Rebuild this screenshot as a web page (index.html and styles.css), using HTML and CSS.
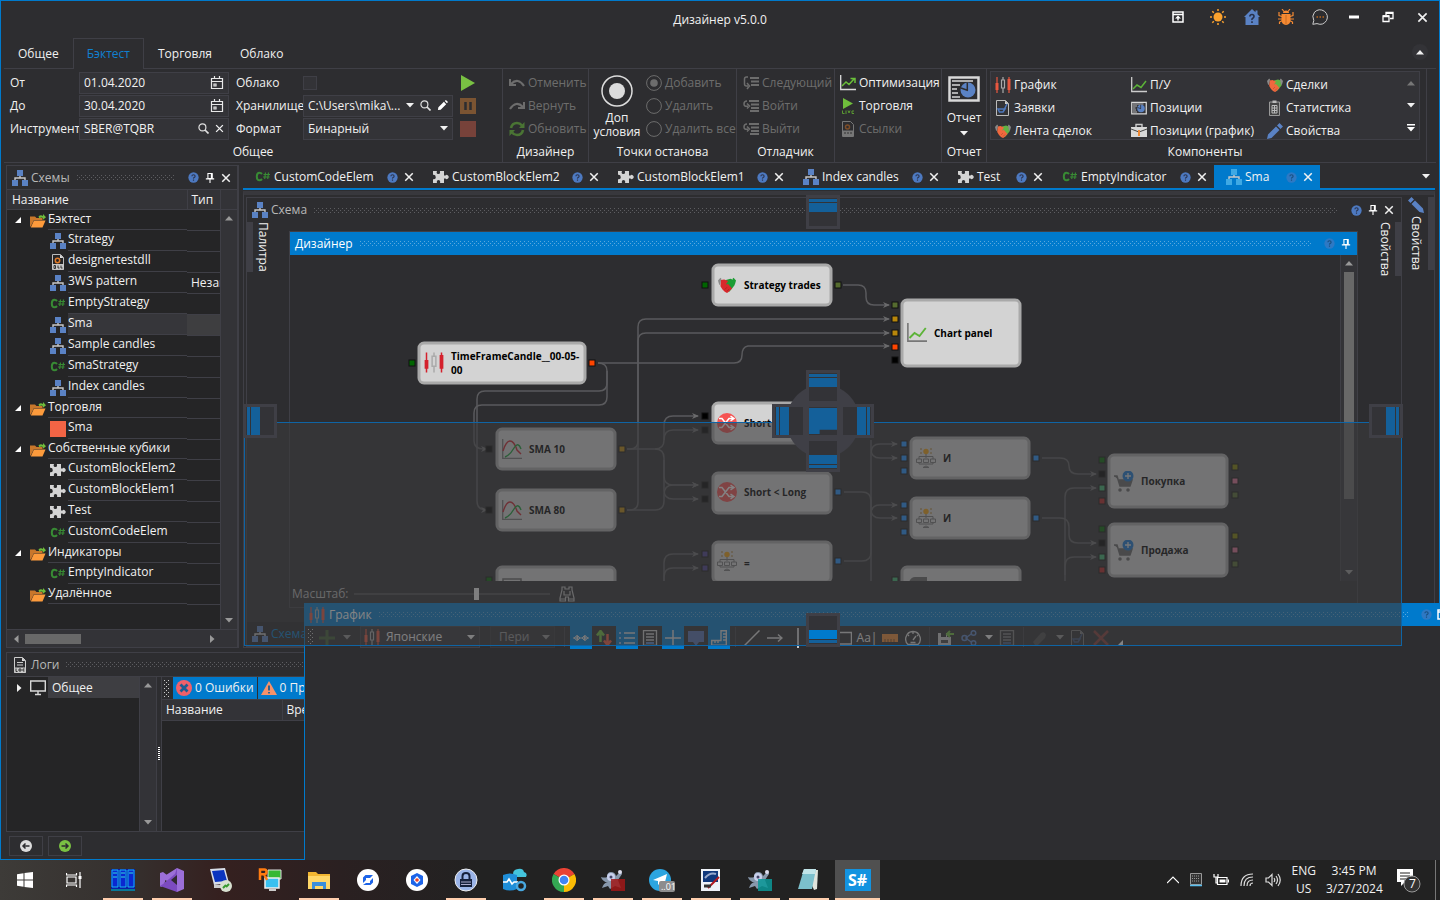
FILE: index.html
```html
<!DOCTYPE html>
<html lang="ru">
<head>
    <meta charset="UTF-8">
    <meta name="viewport" content="width=device-width, initial-scale=1.0">
    <title>Дизайнер v5.0.0</title>
    <link rel="stylesheet" href="styles.css">
</head>
<body>
    <!-- icon set -->
    <svg class="defs" width="0" height="0" aria-hidden="true">
        <symbol id="scheme" viewBox="0 0 16 16"><path d="M5 0h6v6H5zM0 10h6v6H0zM10 10h6v6h-6z" fill="var(--scheme, #5a82c4)"/><path d="M8 6v2M3 10V8h10v2" fill="none" stroke="#c8c8c8" stroke-width="1.4"/></symbol>
        <symbol id="help" viewBox="0 0 16 16"><circle cx="8" cy="8" r="7.500" fill="#4d79c0"/><path d="M5.600 6.200Q5.800 4 8 4t2.300 2q0 1.200-1.300 2T8 9.700M8 11v1.600" fill="none" stroke="#2b3550" stroke-width="1.700"/></symbol>
        <symbol id="pin" viewBox="0 0 12 14"><path d="M3.500 1.500h5v6h-5zM1 8h10M6 8v5" fill="none" stroke="#fff" stroke-width="1.300"/><path d="M7 1.500h2v6H7z" fill="#fff"/></symbol>
        <symbol id="close" viewBox="0 0 12 12"><path d="M1.500 1.500l9 9M10.500 1.500l-9 9" stroke="#f1f1f1" stroke-width="1.800"/></symbol>
        <symbol id="csharp" viewBox="0 0 16 16"><path d="M7 5Q6 3.800 4.500 3.800 1.800 3.800 1.800 7.500T4.500 11.200q1.500 0 2.500-1.200" fill="none" stroke="#388a34" stroke-width="2"/><path d="M10.500 3.500l-.8 6.500M13.500 3.500l-.8 6.500M8.500 5.500H15M8 8h6.500" stroke="#388a34" stroke-width="1.200"/></symbol>
        <symbol id="puzzle" viewBox="0 0 16 16"><path d="M0 2h4q-1.200 3 1.300 3T6.800 2H11v4.500h1.500Q13.500 5 15 6.500t0 3q-1.500 1.500-2.500 0H11V14H7q.8-3-1.500-3T4 14H0v-3.800q2.800.6 2.800-2T0 5.800z" fill="#d4d4d4"/></symbol>
        <symbol id="folder" viewBox="0 0 16 16"><path d="M0 3.500h5l1.500 1.500h6v2H4l-3 6-1 1z" fill="#c9772b"/><path d="M4 7.500h11.500l-3 7H.8z" fill="#fd9b3c"/><path d="M8.500 3.500Q10.500 1.500 13 3V1l3 3.200-3 2.600V5q-2.200-1-3.500.5z" fill="#6fbd3c"/></symbol>
        <symbol id="dll" viewBox="0 0 16 16"><path d="M2.500.5h8l3 3v12h-11z" fill="none" stroke="#bbb"/><path d="M10 .5v3.500h3.500" fill="#ddd"/><circle cx="7.500" cy="6.500" r="2.200" fill="none" stroke="#e07a28" stroke-width="1.500"/><path d="M2 10h12v5.500H2z" fill="#c8c8c8"/><path d="M4 11.500v3h1.500v-3zM8 11.500v2.500h1.500M11 11.500v2.500h1.500" stroke="#333" fill="none"/></symbol>
        <symbol id="log" viewBox="0 0 16 16"><path d="M2.500.5h8l3 3v12h-11z" fill="none" stroke="#ccc"/><path d="M10 .5v3.500h3.500" fill="#ddd"/><path d="M5 5.500h6M5 8h6" stroke="#ccc"/><path d="M2 10.500h12v5H2z" fill="#c8c8c8"/><path d="M4 11.500v3h1.500M7 12h2v2H7zM12.500 12H11v2h1.500" stroke="#333" fill="none"/></symbol>
        <symbol id="candles" viewBox="0 0 16 16"><path d="M2 0v16M14 0v16" stroke="var(--candle, #e8573f)" stroke-width="1.200"/><path d="M.5 6h3v7h-3zM12.500 2h3v11h-3z" fill="var(--candle, #e8573f)"/><path d="M8 0v3M8 11v5M6.500 3h3v8h-3z" fill="none" stroke="#aaa" stroke-width="1.200"/></symbol>
        <symbol id="chart" viewBox="0 0 16 16"><path d="M.7 0v14.500H16" fill="none" stroke="var(--axis, #ccc)" stroke-width="1.300"/><path d="M2 12l4-4 4 2.500L15 4" fill="none" stroke="#5cb338" stroke-width="1.500"/></symbol>
        <symbol id="optimize" viewBox="0 0 16 16"><path d="M.7 0v14.500H16" fill="none" stroke="#ddd" stroke-width="1.300"/><path d="M2 11l4-4 3 2.500 5-5.500M10.500 3.500H15V8" fill="none" stroke="#6abf3a" stroke-width="1.500"/></symbol>
        <symbol id="hands" viewBox="0 0 16 16"><path d="M7 3.500l4-1 3 1 .5 5-2 2.500-2.500 3-2-1L5.500 8z" fill="var(--hand-b, #63b144)"/><path d="M2.500 3.500l3-.5L9 4.500 7 7.500l2-.5 3.500 4-1 1-1 1-1.500 1.500-1 .5-2-1-2-2-1.800-3z" fill="var(--hand-a, #f0683e)"/><path d="M6 12l2-2M8 13.500l2-2" stroke="#0003" stroke-width=".8"/><path d="M0 4l2.200-2.500.8 1L1.800 8 1 7.500z" fill="#8a8a8a"/><path d="M16 4l-2.200-2.500-.8 1L14.200 8l.8-.5z" fill="var(--hand-b, #8a8a8a)"/></symbol>
        <symbol id="order" viewBox="0 0 16 16"><path d="M1.500.5h9l3 3v12h-12z" fill="none" stroke="#bbb"/><path d="M10 .5v3.500h3.500" fill="#ccc"/><path d="M3 9h7l-2 3H4.500zM8 12l4-8" fill="none" stroke="#4e78bd" stroke-width="1.500"/></symbol>
        <symbol id="report" viewBox="0 0 32 26"><path d="M1.500 1.500h29v23h-29z" fill="none" stroke="#d8d8d8" stroke-width="2.500"/><path d="M4 5h21M4 9h8M4 13h5M4 17h6M4 21h8" stroke="#d8d8d8" stroke-width="1.600"/><circle cx="20" cy="14" r="7.500" fill="#5a82c4"/><path d="M19.300 14V6.500M20 14.500l-7-2.500" stroke="#2d2d30" stroke-width="1.500"/></symbol>
        <symbol id="case" viewBox="0 0 16 16"><path d="M5 4V1.500h6V4" fill="none" stroke="#ccc" stroke-width="1.400"/><path d="M0 4h16v10H0z" fill="#d8d8d8"/><path d="M0 6l8 3 8-3" fill="none" stroke="#444"/><path d="M7 7h2v6H7z" fill="#f08a35"/></symbol>
        <symbol id="clip" viewBox="0 0 16 16"><path d="M2.500 2h10v13.500h-10z" fill="#444" stroke="#999"/><path d="M5.500.5h4V3h-4z" fill="#bbb"/><path d="M5 13V5.500h5V13zM5 8h5M5 10.500h5M7.500 5.500V13" fill="none" stroke="#bbb"/></symbol>
        <symbol id="pencil" viewBox="0 0 16 16"><path d="M0 16l1-4.500L9 3.500 12.500 7l-8 8zM10 2.500L12.500 0 16 3.500 13.500 6z" fill="#5a82c4"/></symbol>
        <symbol id="search" viewBox="0 0 12 12"><circle cx="4.800" cy="4.800" r="3.800" fill="none" stroke="#e0e0e0" stroke-width="1.300"/><path d="M7.600 7.600L11.500 11.500" stroke="#e0e0e0" stroke-width="1.800"/></symbol>
        <symbol id="edit" viewBox="0 0 12 12"><path d="M1 11l.5-3L7.500 2l2.500 2.500-6 6zM8.500 1.200L9.700 0 12 2.200 10.800 3.500z" fill="#fff"/></symbol>
        <symbol id="calendar" viewBox="0 0 14 14"><path d="M1.500 2.500h11v10h-11zM1.500 5.500h11M4.500 0v3M9.500 0v3M4 8h2v2H4z" fill="none" stroke="#e8e8e8" stroke-width="1.200"/></symbol>
        <symbol id="undo" viewBox="0 0 16 16"><path d="M1 4v6h6" fill="none" stroke="#6d6d6d" stroke-width="2"/><path d="M2 9Q9 2 15 11" fill="none" stroke="#6d6d6d" stroke-width="2.200"/></symbol>
        <symbol id="refresh" viewBox="0 0 16 16"><path d="M2 7Q3 2 8 2q3 0 5 2.500M14 9q-1 5-6 5-3 0-5-2.500" fill="none" stroke="#4a7434" stroke-width="2.600"/><path d="M15.500 1v6H10zM.5 15V9H6z" fill="#4a7434"/></symbol>
        <symbol id="dot-ring" viewBox="0 0 16 16"><circle cx="8" cy="8" r="7.400" fill="none" stroke="#6d6d6d"/><circle cx="8" cy="8" r="3.800" fill="#6d6d6d"/></symbol>
        <symbol id="ring" viewBox="0 0 16 16"><circle cx="8" cy="8" r="7.400" fill="none" stroke="#6d6d6d"/></symbol>
        <symbol id="step-over" viewBox="0 0 16 16"><path d="M5 2H3.500Q1.500 2 1.500 4v5q0 2 2 2H5M4 8l2.500 3L4 14" fill="none" stroke="#6d6d6d" stroke-width="1.500"/><path d="M7 3h9M8 6.500h8M8 10h8" stroke="#6d6d6d" stroke-width="2"/></symbol>
        <symbol id="step-in" viewBox="0 0 16 16"><path d="M4 3Q1 3 1 6t4 2M4 5.500L6.500 8 4 10.500" fill="none" stroke="#6d6d6d" stroke-width="1.500"/><path d="M6 3h10M8 6.500h8M8 10h8M7 13h9" stroke="#6d6d6d" stroke-width="1.800"/></symbol>
        <symbol id="links" viewBox="0 0 16 16"><path d="M2.500.5h8l3 3v12h-11z" fill="none" stroke="#777"/><circle cx="7.500" cy="6" r="2" fill="none" stroke="#7e4e28" stroke-width="1.500"/><path d="M2 9.500h12V15H2z" fill="#777"/><path d="M4 12h8" stroke="#333" stroke-dasharray="2 1"/></symbol>
        <symbol id="live" viewBox="0 0 16 16"><path d="M3 0l10 5.500L3 11z" fill="#6fbd3c"/><path d="M2.500 12.500v3h2M6 12.500V16M8 12.500l1 2.500 1-2.500M14 13h-2v2.500h2" stroke="#5a9a30" fill="none"/></symbol>
        <symbol id="monitor" viewBox="0 0 16 16"><path d="M.7 1h14.600v10H.7zM8 11v3M5 14.500h6" fill="none" stroke="#d8d8d8" stroke-width="1.400"/></symbol>
        <symbol id="expanded" viewBox="0 0 6 6"><path d="M6 0v6H0z" fill="#fff"/></symbol>
        <symbol id="down" viewBox="0 0 8 5"><path d="M0 0h8L4 4.500z" fill="currentColor"/></symbol>
        <symbol id="up" viewBox="0 0 8 5"><path d="M0 4.500h8L4 0z" fill="currentColor"/></symbol>
        <symbol id="left" viewBox="0 0 5 8"><path d="M4.500 0v8L0 4z" fill="currentColor"/></symbol>
        <symbol id="right" viewBox="0 0 5 8"><path d="M0 0v8l4.500-4z" fill="currentColor"/></symbol>
        <symbol id="indicator" viewBox="0 0 20 20"><path d="M.7 0v19.300H20" fill="none" stroke="#777" stroke-width="1.300"/><path d="M1 12Q4 2 8 2t7 9l4 4" fill="none" stroke="#c8202c" stroke-width="1.400"/><path d="M3 18Q8 16 12 9t7 1" fill="none" stroke="#149c34" stroke-width="1.400"/></symbol>
        <symbol id="cross-flow" viewBox="0 0 20 20"><circle cx="10" cy="10" r="10" fill="#f65252"/><path d="M2 5.500h3l7 9h4M2 14.500h3l7-9h4M13.500 3L17 5.500 13.500 8M13.500 12l3.500 2.500-3.500 2.500" fill="none" stroke="#fff" stroke-width="1.500"/></symbol>
        <symbol id="logic" viewBox="0 0 20 20"><circle cx="10" cy="3.500" r="2.700" fill="#f0a010"/><path d="M4 1h2M4 5h2M14 1h2M14 5h2" stroke="#b08030"/><path d="M10 6v4M3 11V8.500h14V11M.5 11h5v3.500h-5zM7.500 11h5v3.500h-5zM14.500 11h5v3.500h-5zM3 14.500V16h14v-1.500M7 19.500q3-3 6 0z" fill="none" stroke="#777"/></symbol>
        <symbol id="cart" viewBox="0 0 20 22"><path d="M0 5h3l3 10h10l2-6H5" fill="#666" stroke="#666" stroke-width="1.500"/><circle cx="6" cy="19" r="1.800" fill="#666"/><circle cx="14" cy="19" r="1.800" fill="#666"/><circle cx="14" cy="5" r="5.500" fill="#1676d0"/><path d="M14 2v6M11 5h6" stroke="#ddd" stroke-width="1.300"/></symbol>
        <symbol id="text-doc" viewBox="0 0 16 16"><path d="M1.500.5h13v15h-13z" fill="none" stroke="#ccc" stroke-width="1.300"/><path d="M4 4h8M4 7h8M4 10h8" stroke="#ccc" stroke-width="1.500"/><path d="M4 12h8v2H4z" fill="#5a82c4"/></symbol>
        <marker id="arrow" viewBox="0 0 7 6" refX="6" refY="3" markerWidth="7" markerHeight="6" markerUnits="userSpaceOnUse" orient="auto"><path d="M0 0l7 3-7 3 2-3z" fill="#6a6a6c"/></marker>
    </svg>

    <div class="app">
        <header class="titlebar">
            <h1>Дизайнер v5.0.0</h1>
            <div class="title-buttons">
                <button class="wide" aria-label="Закрепить"><svg width="12" height="12" viewBox="0 0 12 12"><path d="M1 1h10v10H1zM1 3.500h10" fill="none" stroke="#fff" stroke-width="1.500"/><path d="M6 4.500L9 7.500H3zM5.300 7h1.400v2.500H5.300z" fill="#fff"/></svg></button>
                <button aria-label="Тема"><svg width="16" height="16" viewBox="0 0 16 16"><circle cx="8" cy="8" r="4.500" fill="#fba22e"/><path d="M8 0v2M8 14v2M0 8h2M14 8h2M2.300 2.300l1.500 1.500M12.200 12.200l1.500 1.500M13.700 2.300l-1.500 1.500M3.800 12.200l-1.500 1.500" stroke="#fba22e" stroke-width="1.500"/></svg></button>
                <button aria-label="Справка"><svg width="16" height="16" viewBox="0 0 16 16"><path d="M8 0l3.500 3.200V1.500h2v3.700L16 8h-1.500v8h-13V8H0z" fill="#5a82c4"/><path d="M5.800 7.500Q6 5.500 8 5.500t2 2q0 1-1.200 1.700T8 11M8 12.300V14" fill="none" stroke="#26304a" stroke-width="1.600"/></svg></button>
                <button aria-label="Ошибка"><svg width="16" height="16" viewBox="0 0 16 16"><path d="M5 4q0-2.500 3-2.500T11 4zM3.500 5h9v6q0 4.500-4.500 5-4.500-.5-4.500-5z" fill="#f58a33"/><path d="M4 0l2 2.500M12 0l-2 2.500M1 3v3.500l3 1M15 3v3.500l-3 1M0 10h4M16 10h-4M1.500 15v-2l3-1.500M14.500 15v-2l-3-1.500" fill="none" stroke="#f58a33" stroke-width="1.200"/><path d="M8 6v9" stroke="#c86a20"/></svg></button>
                <button aria-label="Чат"><svg width="16" height="16" viewBox="0 0 16 16"><path d="M.8 15.300l1-3.800Q-.5 7 2.500 3.200 7-1.200 12.500 2.300q4.500 4 2 9.200Q11 17 5 14.600z" fill="none" stroke="#ccc"/><path d="M4.500 8h1.500M7.500 8H9M10.500 8H12" stroke="#b8651e" stroke-width="1.500"/></svg></button>
                <button aria-label="Свернуть"><svg width="12" height="12" viewBox="0 0 12 12"><path d="M1 6h10" stroke="#fff" stroke-width="3"/></svg></button>
                <button aria-label="Восстановить"><svg width="12" height="12" viewBox="0 0 12 12"><path d="M1 5h6v5.500H1zM4 4V1.500h7v6H8" fill="none" stroke="#fff" stroke-width="1.300"/><path d="M1 5.300h6M4 2h7" stroke="#fff" stroke-width="2"/></svg></button>
                <button aria-label="Закрыть"><svg width="11" height="11"><use href="#close"/></svg></button>
            </div>
        </header>

        <nav class="ribbon-tabs">
            <a href="#">Общее</a>
            <a href="#" class="active">Бэктест</a>
            <a href="#">Торговля</a>
            <a href="#">Облако</a>
            <button class="collapse" aria-label="Свернуть ленту"><svg width="8" height="5"><use href="#up"/></svg></button>
        </nav>

        <section class="ribbon">
            <div class="group g-common">
                <div class="fields">
                    <label for="from">От</label>
                    <div class="field"><input id="from" value="01.04.2020"><button aria-label="Календарь"><svg width="14" height="14"><use href="#calendar"/></svg></button></div>
                    <label for="cloud">Облако</label>
                    <input type="checkbox" id="cloud">
                    <button aria-label="Старт"><svg width="16" height="16" viewBox="0 0 16 16"><path d="M1 0l14 8-14 8z" fill="#79c143"/></svg></button>
                    <label for="to">До</label>
                    <div class="field"><input id="to" value="30.04.2020"><button aria-label="Календарь"><svg width="14" height="14"><use href="#calendar"/></svg></button></div>
                    <label for="storage">Хранилище</label>
                    <div class="field"><select id="storage"><option>C:\Users\mika\....</option></select><svg width="8" height="5"><use href="#down"/></svg><button aria-label="Найти"><svg width="11" height="11"><use href="#search"/></svg></button><button aria-label="Изменить"><svg width="11" height="11"><use href="#edit"/></svg></button></div>
                    <button aria-label="Пауза"><svg width="16" height="16" viewBox="0 0 16 16"><path d="M0 0h16v16H0z" fill="#7b5432"/><path d="M5.500 4v8M10.500 4v8" stroke="#2d2d30" stroke-width="2.500"/></svg></button>
                    <label for="security">Инструмент</label>
                    <div class="field"><input id="security" value="SBER@TQBR"><button aria-label="Найти"><svg width="11" height="11"><use href="#search"/></svg></button><button aria-label="Очистить"><svg width="9" height="9"><use href="#close"/></svg></button></div>
                    <label for="format">Формат</label>
                    <div class="field"><select id="format"><option>Бинарный</option></select><svg width="8" height="5"><use href="#down"/></svg></div>
                    <button aria-label="Стоп"><svg width="16" height="16" viewBox="0 0 16 16"><path d="M0 0h16v16H0z" fill="#77423a"/></svg></button>
                </div>
                <h2>Общее</h2>
            </div>
            <div class="group g-designer">
                <div class="commands">
                    <button disabled><svg width="16" height="16"><use href="#undo"/></svg>Отменить</button>
                    <button disabled><svg class="flip" width="16" height="16"><use href="#undo"/></svg>Вернуть</button>
                    <button disabled><svg width="16" height="16"><use href="#refresh"/></svg>Обновить</button>
                </div>
                <h2>Дизайнер</h2>
            </div>
            <div class="group g-breaks">
                <div class="split">
                    <button class="big"><svg width="32" height="32" viewBox="0 0 32 32"><circle cx="16" cy="16" r="15" fill="none" stroke="#ddd" stroke-width="1.500"/><circle cx="16" cy="16" r="8" fill="#dcdcdc"/></svg>Доп<br>условия</button>
                    <div class="commands">
                        <button disabled><svg width="16" height="16"><use href="#dot-ring"/></svg>Добавить</button>
                        <button disabled><svg width="16" height="16"><use href="#ring"/></svg>Удалить</button>
                        <button disabled><svg width="16" height="16"><use href="#ring"/></svg>Удалить все</button>
                    </div>
                </div>
                <h2>Точки останова</h2>
            </div>
            <div class="group g-debug">
                <div class="commands">
                    <button disabled><svg width="16" height="16"><use href="#step-over"/></svg>Следующий</button>
                    <button disabled><svg width="16" height="16"><use href="#step-in"/></svg>Войти</button>
                    <button disabled><svg width="16" height="16"><use href="#step-in"/></svg>Выйти</button>
                </div>
                <h2>Отладчик</h2>
            </div>
            <div class="group g-run">
                <div class="commands">
                    <button><svg width="16" height="16"><use href="#optimize"/></svg>Оптимизация</button>
                    <button><svg width="16" height="16"><use href="#live"/></svg>Торговля</button>
                    <button disabled><svg width="16" height="16"><use href="#links"/></svg>Ссылки</button>
                </div>
            </div>
            <div class="group g-report">
                <button class="big"><svg width="32" height="32"><use href="#report"/></svg>Отчет<svg width="8" height="5"><use href="#down"/></svg></button>
                <h2>Отчет</h2>
            </div>
            <div class="group g-parts">
                <div class="gallery">
                    <div class="gallery-items">
                        <button><svg width="16" height="16"><use href="#candles"/></svg>График</button>
                        <button><svg width="16" height="16"><use href="#chart"/></svg>П/У</button>
                        <button><svg width="16" height="16"><use href="#hands"/></svg>Сделки</button>
                        <button><svg width="16" height="16"><use href="#order"/></svg>Заявки</button>
                        <button><svg width="16" height="16"><use href="#report"/></svg>Позиции</button>
                        <button><svg width="16" height="16"><use href="#clip"/></svg>Статистика</button>
                        <button><svg width="16" height="16"><use href="#hands"/></svg>Лента сделок</button>
                        <button><svg width="16" height="16"><use href="#case"/></svg>Позиции (график)</button>
                        <button><svg width="16" height="16"><use href="#pencil"/></svg>Свойства</button>
                    </div>
                    <div class="gallery-nav">
                        <button class="dim" aria-label="Вверх"><svg width="8" height="5"><use href="#up"/></svg></button>
                        <button aria-label="Вниз"><svg width="8" height="5"><use href="#down"/></svg></button>
                        <button aria-label="Все"><svg width="8" height="8" viewBox="0 0 8 8"><path d="M0 0h8v1.500H0zM0 3h8L4 7.500z" fill="#fff"/></svg></button>
                    </div>
                </div>
                <h2>Компоненты</h2>
            </div>
        </section>

        <main class="workspace">
            <section class="panel schemes">
                <header class="caption">
                    <svg width="16" height="16"><use href="#scheme"/></svg>
                    <h3>Схемы</h3>
                    <span class="dots"></span>
                    <button aria-label="Справка"><svg width="11" height="11"><use href="#help"/></svg></button>
                    <button aria-label="Закрепить"><svg width="10" height="12"><use href="#pin"/></svg></button>
                    <button aria-label="Закрыть"><svg width="10" height="10"><use href="#close"/></svg></button>
                </header>
                <div class="tree">
                    <table>
                        <thead><tr><th>Название</th><th>Тип</th><th class="gutter"></th></tr></thead>
                        <tbody>
                            <tr class="parent"><td><svg class="exp" width="6" height="6"><use href="#expanded"/></svg><svg width="16" height="16"><use href="#folder"/></svg><span>Бэктест</span></td><td></td></tr>
                            <tr><td><svg width="16" height="16"><use href="#scheme"/></svg><span>Strategy</span></td><td></td></tr>
                            <tr><td><svg width="16" height="16"><use href="#dll"/></svg><span>designertestdll</span></td><td></td></tr>
                            <tr><td><svg width="16" height="16"><use href="#scheme"/></svg><span>3WS pattern</span></td><td>Независимая</td></tr>
                            <tr><td><svg width="16" height="16"><use href="#csharp"/></svg><span>EmptyStrategy</span></td><td></td></tr>
                            <tr class="selected"><td><svg width="16" height="16"><use href="#scheme"/></svg><span>Sma</span></td><td></td></tr>
                            <tr><td><svg width="16" height="16"><use href="#scheme"/></svg><span>Sample candles</span></td><td></td></tr>
                            <tr><td><svg width="16" height="16"><use href="#csharp"/></svg><span>SmaStrategy</span></td><td></td></tr>
                            <tr><td><svg width="16" height="16"><use href="#scheme"/></svg><span>Index candles</span></td><td></td></tr>
                            <tr class="parent"><td><svg class="exp" width="6" height="6"><use href="#expanded"/></svg><svg width="16" height="16"><use href="#folder"/></svg><span>Торговля</span></td><td></td></tr>
                            <tr><td><svg width="16" height="16" viewBox="0 0 16 16"><path d="M0 0h16v16H0z" fill="#f26445"/></svg><span>Sma</span></td><td></td></tr>
                            <tr class="parent"><td><svg class="exp" width="6" height="6"><use href="#expanded"/></svg><svg width="16" height="16"><use href="#folder"/></svg><span>Собственные кубики</span></td><td></td></tr>
                            <tr><td><svg width="16" height="16"><use href="#puzzle"/></svg><span>CustomBlockElem2</span></td><td></td></tr>
                            <tr><td><svg width="16" height="16"><use href="#puzzle"/></svg><span>CustomBlockElem1</span></td><td></td></tr>
                            <tr><td><svg width="16" height="16"><use href="#puzzle"/></svg><span>Test</span></td><td></td></tr>
                            <tr><td><svg width="16" height="16"><use href="#csharp"/></svg><span>CustomCodeElem</span></td><td></td></tr>
                            <tr class="parent"><td><svg class="exp" width="6" height="6"><use href="#expanded"/></svg><svg width="16" height="16"><use href="#folder"/></svg><span>Индикаторы</span></td><td></td></tr>
                            <tr><td><svg width="16" height="16"><use href="#csharp"/></svg><span>EmptyIndicator</span></td><td></td></tr>
                            <tr class="parent"><td><i class="exp"></i><svg width="16" height="16"><use href="#folder"/></svg><span>Удалённое</span></td><td></td></tr>
                        </tbody>
                    </table>
                    <div class="vscroll"><svg width="8" height="5"><use href="#up"/></svg><svg width="8" height="5"><use href="#down"/></svg></div>
                </div>
                <div class="hscroll"><svg width="5" height="8"><use href="#left"/></svg><i></i><svg width="5" height="8"><use href="#right"/></svg></div>
            </section>

            <section class="documents">
                <nav class="doc-tabs">
                    <div class="doc-tab"><svg width="16" height="16"><use href="#csharp"/></svg><a href="#">CustomCodeElem</a><button aria-label="Справка"><svg width="11" height="11"><use href="#help"/></svg></button><button aria-label="Закрыть"><svg width="10" height="10"><use href="#close"/></svg></button></div>
                    <div class="doc-tab"><svg width="16" height="16"><use href="#puzzle"/></svg><a href="#">CustomBlockElem2</a><button aria-label="Справка"><svg width="11" height="11"><use href="#help"/></svg></button><button aria-label="Закрыть"><svg width="10" height="10"><use href="#close"/></svg></button></div>
                    <div class="doc-tab"><svg width="16" height="16"><use href="#puzzle"/></svg><a href="#">CustomBlockElem1</a><button aria-label="Справка"><svg width="11" height="11"><use href="#help"/></svg></button><button aria-label="Закрыть"><svg width="10" height="10"><use href="#close"/></svg></button></div>
                    <div class="doc-tab"><svg width="16" height="16"><use href="#scheme"/></svg><a href="#">Index candles</a><button aria-label="Справка"><svg width="11" height="11"><use href="#help"/></svg></button><button aria-label="Закрыть"><svg width="10" height="10"><use href="#close"/></svg></button></div>
                    <div class="doc-tab"><svg width="16" height="16"><use href="#puzzle"/></svg><a href="#">Test</a><button aria-label="Справка"><svg width="11" height="11"><use href="#help"/></svg></button><button aria-label="Закрыть"><svg width="10" height="10"><use href="#close"/></svg></button></div>
                    <div class="doc-tab"><svg width="16" height="16"><use href="#csharp"/></svg><a href="#">EmptyIndicator</a><button aria-label="Справка"><svg width="11" height="11"><use href="#help"/></svg></button><button aria-label="Закрыть"><svg width="10" height="10"><use href="#close"/></svg></button></div>
                    <div class="doc-tab active"><svg width="16" height="16"><use href="#scheme"/></svg><a href="#">Sma</a><button class="faded" aria-label="Справка"><svg width="11" height="11"><use href="#help"/></svg></button><button aria-label="Закрыть"><svg width="10" height="10"><use href="#close"/></svg></button></div>
                    <button class="more" aria-label="Список"><svg width="8" height="5"><use href="#down"/></svg></button>
                </nav>
                <div class="doc-body">
                    <div class="scheme-panel">
                        <header class="caption">
                            <svg width="16" height="16"><use href="#scheme"/></svg>
                            <h3>Схема</h3>
                            <span class="dots"></span>
                            <button aria-label="Справка"><svg width="11" height="11"><use href="#help"/></svg></button>
                            <button aria-label="Закрепить"><svg width="10" height="12"><use href="#pin"/></svg></button>
                            <button aria-label="Закрыть"><svg width="10" height="10"><use href="#close"/></svg></button>
                        </header>
                        <div class="scheme-body">
                            <button class="side-tab left">Палитра</button>
                            <div class="designer">
                                <header class="caption blue">
                                    <h3>Дизайнер</h3>
                                    <span class="dots"></span>
                                    <button class="faded" aria-label="Справка"><svg width="11" height="11"><use href="#help"/></svg></button>
                                    <button aria-label="Закрепить"><svg width="10" height="12"><use href="#pin"/></svg></button>
                                </header>
                                <div class="canvas">
                                    <svg class="diagram" width="1050" height="327" viewBox="290 255 1050 327">
                                        <g class="wires">
                                            <path d="M843 285h15q8 0 8 8v4q0 8 8 8h15"/>
                                            <path d="M598 363h136q8 0 8-8t6-9h141"/>
                                            <path d="M598 363q9 0 9 8v12q0 8-8 8H485q-8 0-8 8v102q0 9 10 9"/>
                                            <path d="M607 371v26q0 8-8 8H482q-8 0-8 8v28q0 8 10 8h3"/>
                                            <path d="M627 510h3q8 0 8-8V327q0-8 8-8h243"/>
                                            <path d="M627 449h3q8 0 8-8V341q0-8 8-8h243"/>
                                            <path d="M627 449h28q9 0 9-9v-15q0-9 9-9h25"/>
                                            <path d="M664 440q0-10 9-10h25"/>
                                            <path d="M655 449q9 0 9 9v18q0 9 9 9h25"/>
                                            <path d="M627 510h28q9 0 9-9v-6q0-10 9-10h25"/>
                                            <path d="M664 460v30q0 9 9 9h25"/>
                                            <path d="M664 582v-19q0-9 9-9h25"/>
                                            <path d="M664 582v-5q0-9 9-9h25"/>
                                            <path class="tail" d="M844 492h18q9 0 9 9v81"/>
                                            <path d="M844 561h18q9 0 9-9V453q0-9 9-9h17"/>
                                            <path d="M871 440v9q0 9 9 9h17"/>
                                            <path d="M871 520v-6q0-9 9-9h17"/>
                                            <path d="M871 500v9q0 9 9 9h17"/>
                                            <path d="M1042 458h18q9 0 9 8t9 8h18"/>
                                            <path d="M1042 518h18q9 0 9 9v8q0 8 9 8h18"/>
                                            <path d="M1065 582v-85q0-9 9-9h22"/>
                                            <path d="M1065 575v-9q0-9 9-9h22"/>
                                        </g>
                                        <g class="node">
                                            <rect x="713" y="265" width="118" height="40"/>
                                            <rect x="419" y="343" width="166" height="40"/>
                                            <rect x="902" y="300" width="118" height="66"/>
                                            <rect x="713" y="403" width="118" height="40"/>
                                            <rect x="497" y="429" width="118" height="40"/>
                                            <rect x="497" y="490" width="118" height="40"/>
                                            <rect x="497" y="567" width="118" height="40"/>
                                            <rect x="713" y="473" width="118" height="40"/>
                                            <rect x="713" y="542" width="118" height="40"/>
                                            <rect x="911" y="438" width="118" height="40"/>
                                            <rect x="911" y="498" width="118" height="40"/>
                                            <rect x="902" y="567" width="118" height="40"/>
                                            <rect x="1109" y="455" width="118" height="52"/>
                                            <rect x="1109" y="524" width="118" height="52"/>
                                        </g>
                                        <g class="glyphs">
                                            <use href="#hands" x="718" y="276" width="18" height="18"/>
                                            <use href="#candles" x="424" y="352" width="20" height="21"/>
                                            <use href="#chart" x="907" y="323" width="20" height="20"/>
                                            <use href="#cross-flow" x="717" y="413" width="20" height="20"/>
                                            <use href="#indicator" x="502" y="439" width="20" height="20"/>
                                            <use href="#indicator" x="502" y="500" width="20" height="20"/>
                                            <use href="#cross-flow" x="717" y="482" width="20" height="20"/>
                                            <use href="#logic" x="717" y="551" width="20" height="20"/>
                                            <use href="#logic" x="916" y="448" width="20" height="20"/>
                                            <use href="#logic" x="916" y="508" width="20" height="20"/>
                                            <use href="#cart" x="1114" y="471" width="20" height="22"/>
                                            <use href="#cart" x="1114" y="540" width="20" height="22"/>
                                            <path d="M503 579h18v4h-18zM506 582h12" fill="none" stroke="#666" stroke-width="1.500"/>
                                            <path d="M909 582q2-5 6-5h12v5z" fill="#666"/>
                                        </g>
                                        <g class="labels">
                                            <text x="744" y="289">Strategy trades</text>
                                            <text x="451" y="360">TimeFrameCandle__00-05-</text>
                                            <text x="451" y="374">00</text>
                                            <text x="934" y="337">Chart panel</text>
                                            <text x="744" y="427">Short &gt; Long</text>
                                            <text x="529" y="453">SMA 10</text>
                                            <text x="529" y="514">SMA 80</text>
                                            <text x="744" y="496">Short &lt; Long</text>
                                            <text x="744" y="567">=</text>
                                            <text x="943" y="462">И</text>
                                            <text x="943" y="522">И</text>
                                            <text x="1141" y="485">Покупка</text>
                                            <text x="1141" y="554">Продажа</text>
                                        </g>
                                        <g class="ports">
                                            <g fill="#006400"><rect x="702" y="282" width="6" height="6"/><rect x="409" y="360" width="6" height="6"/><rect x="486" y="577" width="6" height="6"/><rect x="1099" y="457" width="6" height="6"/><rect x="1099" y="526" width="6" height="6"/></g>
                                            <g fill="#556b2f"><rect x="835" y="282" width="6" height="6"/><rect x="892" y="302" width="6" height="6"/><rect x="1232" y="492" width="6" height="6"/><rect x="1232" y="561" width="6" height="6"/></g>
                                            <g fill="#b8860b"><rect x="892" y="316" width="6" height="6"/><rect x="892" y="330" width="6" height="6"/><rect x="619" y="446" width="6" height="6"/><rect x="619" y="507" width="6" height="6"/></g>
                                            <g fill="#ff4500"><rect x="892" y="344" width="6" height="6"/><rect x="589" y="360" width="6" height="6"/></g>
                                            <g fill="#000"><rect x="892" y="357" width="6" height="6"/><rect x="702" y="413" width="6" height="6"/><rect x="702" y="427" width="6" height="6"/><rect x="486" y="446" width="6" height="6"/><rect x="486" y="507" width="6" height="6"/><rect x="702" y="482" width="6" height="6"/><rect x="702" y="496" width="6" height="6"/><rect x="1099" y="471" width="6" height="6"/><rect x="1099" y="540" width="6" height="6"/></g>
                                            <g fill="#483d8b"><rect x="702" y="551" width="6" height="6"/><rect x="702" y="565" width="6" height="6"/></g>
                                            <g fill="#1e90ff"><rect x="835" y="489" width="6" height="6"/><rect x="835" y="558" width="6" height="6"/><rect x="901" y="441" width="6" height="6"/><rect x="901" y="455" width="6" height="6"/><rect x="901" y="468" width="6" height="6"/><rect x="901" y="502" width="6" height="6"/><rect x="901" y="515" width="6" height="6"/><rect x="901" y="529" width="6" height="6"/><rect x="1033" y="455" width="6" height="6"/><rect x="1033" y="515" width="6" height="6"/></g>
                                            <g fill="#3cb371"><rect x="892" y="577" width="6" height="6"/><rect x="1099" y="485" width="6" height="6"/><rect x="1099" y="554" width="6" height="6"/></g>
                                            <g fill="#b22222"><rect x="1099" y="498" width="6" height="6"/><rect x="1099" y="567" width="6" height="6"/></g>
                                            <g fill="#808000"><rect x="1232" y="464" width="6" height="6"/><rect x="1232" y="533" width="6" height="6"/></g>
                                            <g fill="#db7093"><rect x="1232" y="478" width="6" height="6"/><rect x="1232" y="547" width="6" height="6"/></g>
                                        </g>
                                    </svg>
                                    <div class="vscroll"><svg width="8" height="5"><use href="#up"/></svg><i></i><svg width="8" height="5"><use href="#down"/></svg></div>
                                </div>
                                <div class="scale">
                                    <label for="zoom">Масштаб:</label>
                                    <input type="range" id="zoom" min="0" max="100" value="63">
                                    <button aria-label="Обзор"><svg width="16" height="16" viewBox="0 0 16 16"><path d="M3 1h3v2h4V1h3v3l2 8v3H9.500v-4h-3v4H1v-3l2-8zM5 5v4h6V5M1 13h5M10 13h5" fill="none" stroke="#bbb" stroke-width="1.200"/></svg></button>
                                </div>
                            </div>
                            <button class="side-tab right">Свойства</button>
                        </div>
                        <div class="bottom-tabs"><a href="#"><svg width="16" height="16"><use href="#scheme"/></svg>Схема</a></div>
                    </div>
                    <aside class="doc-side"><button class="side-tab right"><svg class="turn" width="16" height="16"><use href="#pencil"/></svg>Свойства</button></aside>
                </div>
            </section>
        </main>

        <section class="panel logs">
            <header class="caption">
                <svg width="16" height="16"><use href="#log"/></svg>
                <h3>Логи</h3>
                <span class="dots"></span>
            </header>
            <div class="logs-body">
                <div class="log-tree">
                    <div class="log-row"><svg width="5" height="8"><use href="#right"/></svg><svg width="16" height="16"><use href="#monitor"/></svg><span>Общее</span></div>
                    <div class="vscroll"><svg width="8" height="5"><use href="#up"/></svg><svg width="8" height="5"><use href="#down"/></svg></div>
                </div>
                <div class="splitter"></div>
                <div class="log-list">
                    <div class="log-filter">
                        <i class="grip"></i>
                        <button><svg width="16" height="16" viewBox="0 0 16 16"><circle cx="8" cy="8" r="8" fill="#f0606a"/><path d="M4.500 4.500l7 7M11.500 4.500l-7 7" stroke="#1d5d92" stroke-width="2.800"/></svg>0 Ошибки</button>
                        <button><svg width="16" height="16" viewBox="0 0 16 16"><path d="M8 1l8 14H0z" fill="#f5926a"/><path d="M8 5.500v5M8 12v1.500" stroke="#1d5d92" stroke-width="1.800"/></svg>0 Предупреждения</button>
                    </div>
                    <table>
                        <thead><tr><th>Название</th><th>Время</th></tr></thead>
                    </table>
                </div>
            </div>
        </section>

        <footer class="history">
            <button aria-label="Назад"><svg width="12" height="12" viewBox="0 0 12 12"><circle cx="6" cy="6" r="6" fill="#dcdcdc"/><path d="M9.500 6H3M5.500 3.500L3 6l2.500 2.500" fill="none" stroke="#2d2d30" stroke-width="1.500"/></svg></button>
            <button aria-label="Вперёд"><svg width="12" height="12" viewBox="0 0 12 12"><circle cx="6" cy="6" r="6" fill="#7ac143"/><path d="M2.500 6H9M6.500 3.500L9 6 6.500 8.500" fill="none" stroke="#2d2d30" stroke-width="1.500"/></svg></button>
        </footer>

        <!-- detached chart window being dragged -->
        <section class="chart-window">
            <header class="caption blue">
                <svg width="16" height="16"><use href="#candles"/></svg>
                <h3>График</h3>
                <span class="dots"></span>
                <button class="faded" aria-label="Справка"><svg width="11" height="11"><use href="#help"/></svg></button>
                <button aria-label="Развернуть"><svg width="11" height="11" viewBox="0 0 11 11"><path d="M1 1h9v9H1zM1 3h9" fill="none" stroke="#fff" stroke-width="1.500"/></svg></button>
            </header>
            <div class="toolbar">
                <i class="grip"></i>
                <button class="off" aria-label="Добавить"><svg width="16" height="16" viewBox="0 0 16 16"><path d="M8 0v16M0 8h16" stroke="#4f8f35" stroke-width="3"/></svg></button>
                <button class="arrow off" aria-label="Меню"><svg width="8" height="5"><use href="#down"/></svg></button>
                <div class="combo"><svg width="16" height="16"><use href="#candles"/></svg><select aria-label="Вид"><option>Японские</option></select><svg width="8" height="5"><use href="#down"/></svg></div>
                <div class="combo period off"><select aria-label="Период" disabled><option>Период</option></select><svg width="8" height="5"><use href="#down"/></svg></div>
                <i class="sep"></i>
                <button class="on" aria-label="Сжать"><svg width="16" height="16" viewBox="0 0 16 16"><path d="M0 8h16M1 8l3-2.500v5zM7 8L4.500 5.500v5zM9 8l2.500-2.500v5zM15 8l-3-2.500v5z" fill="none" stroke="#ddd"/></svg></button>
                <button aria-label="Сделки"><svg width="16" height="16" viewBox="0 0 16 16"><path d="M4.500 12V2M1 5.500L4.500 1 8 5.500" fill="none" stroke="#6fbd3c" stroke-width="2.500"/><path d="M11.500 4v11M8 10.500l3.500 4.500 3.500-4.500" fill="none" stroke="#f0583c" stroke-width="2.500"/></svg></button>
                <button class="on" aria-label="Легенда"><svg width="16" height="16" viewBox="0 0 16 16"><path d="M5 3h11M5 8h11M5 13h11" stroke="#ddd" stroke-width="1.500"/><path d="M0 3h2M0 8h2M0 13h2" stroke="#8fb8e8" stroke-width="2"/></svg></button>
                <button aria-label="Текст"><svg width="16" height="16"><use href="#text-doc"/></svg></button>
                <button class="on" aria-label="Перекрестие"><svg width="16" height="16" viewBox="0 0 16 16"><path d="M8 0v16M0 8h16" stroke="#ddd" stroke-width="1.500"/></svg></button>
                <button aria-label="Подсказка"><svg width="16" height="16" viewBox="0 0 16 16"><path d="M0 1h16v11h-5l-3 4-3-4H0z" fill="#5571b0"/></svg></button>
                <button class="on" aria-label="Линейка"><svg width="16" height="16" viewBox="0 0 16 16"><path d="M.7 10.500H10V.7h5.300v14.600H.7zM12 4h3M12 7h3M12 10h3M4 11v2M7 11v2" fill="none" stroke="#ddd" stroke-width="1.400"/></svg></button>
                <i class="sep"></i>
                <button aria-label="Линия"><svg width="16" height="16" viewBox="0 0 16 16"><path d="M.5 15.500l15-15" stroke="#ddd" stroke-width="1.500"/></svg></button>
                <button aria-label="Стрелка"><svg width="16" height="16" viewBox="0 0 16 16"><path d="M0 8h15M11 4.500L15 8l-4 3.500" fill="none" stroke="#ddd" stroke-width="1.500"/></svg></button>
                <button aria-label="Вертикаль"><svg width="16" height="20" viewBox="0 0 16 20"><path d="M8 0v20" stroke="#fff" stroke-width="1.500"/></svg></button>
                <button aria-label="Горизонталь"><svg width="16" height="16" viewBox="0 0 16 16"><path d="M0 8h16" stroke="#ddd" stroke-width="1.500"/></svg></button>
                <button aria-label="Прямоугольник"><svg width="16" height="16" viewBox="0 0 16 16"><path d="M0 2.500h15.500v11.500H0" fill="none" stroke="#ddd" stroke-width="1.500"/></svg></button>
                <button aria-label="Надпись">Aa|</button>
                <button aria-label="Измерить"><svg width="16" height="16" viewBox="0 0 16 16"><path d="M0 4h16v8H0z" fill="#f08a35"/><path d="M3 9v3M6 9v3M9 9v3M12 9v3" stroke="#7a4a20"/></svg></button>
                <button aria-label="Скорость"><svg width="16" height="16" viewBox="0 0 16 16"><path d="M3 14.500Q0 12 .8 7.500 2.500 1.500 8 1.500t7.200 6Q16 12 13 14.500zM8 10l3-4M8 2v2M3 5l1 1M13 5l-1 1M5.500 12.500h5" fill="none" stroke="#ddd" stroke-width="1.300"/></svg></button>
                <i class="sep"></i>
                <button aria-label="Сохранить"><svg width="16" height="16" viewBox="0 0 16 16"><path d="M0 3h3v4h5V3h1v4h4v8H0z" fill="#ccc"/><path d="M3 10h7v3H3z" fill="#444"/><path d="M16 4H9M12 1L9 4l3 3" fill="none" stroke="#6fbd3c" stroke-width="2"/></svg></button>
                <button aria-label="Поделиться"><svg width="16" height="16" viewBox="0 0 16 16"><path d="M4.500 8L11 3.500M4.500 8l6.500 4.500" stroke="#5a82c4" stroke-width="1.400"/><g fill="none" stroke="#5a82c4" stroke-width="1.500"><circle cx="3.500" cy="8" r="2.500"/><circle cx="12.500" cy="3" r="2.300"/><circle cx="12.500" cy="13" r="2.300"/></g></svg></button>
                <button class="arrow" aria-label="Меню"><svg width="8" height="5"><use href="#down"/></svg></button>
                <button class="off" aria-label="Список"><svg width="16" height="16"><use href="#text-doc"/></svg></button>
                <i class="sep"></i>
                <button class="off" aria-label="Вложение"><svg width="16" height="16" viewBox="0 0 16 16"><path d="M3 15L1 12l8-9q4-2 5 2l-1 3-7 7z" fill="#666"/></svg></button>
                <button class="arrow off" aria-label="Меню"><svg width="8" height="5"><use href="#down"/></svg></button>
                <button class="off" aria-label="Заявка"><svg width="16" height="16"><use href="#order"/></svg></button>
                <button class="off" aria-label="Удалить"><svg width="16" height="16" viewBox="0 0 16 16"><path d="M1 1l14 14M15 1L1 15" stroke="#d84a3a" stroke-width="2.500"/></svg></button>
                <svg class="corner" width="6" height="6"><use href="#expanded"/></svg>
            </div>
        </section>

        <!-- docking preview and guides -->
        <div class="dock">
            <div class="preview"></div>
            <i class="guide top edge"></i>
            <i class="guide left edge"></i>
            <i class="guide right edge"></i>
            <i class="guide bottom edge hot"></i>
            <div class="compass">
                <i class="guide top"></i>
                <i class="guide left"></i>
                <i class="guide center"></i>
                <i class="guide right"></i>
                <i class="guide bottom"></i>
            </div>
        </div>
    </div>

    <footer class="taskbar">
        <button aria-label="Start"><svg width="16" height="16" viewBox="0 0 16 16"><path d="M0 2.200L6.500 1.300v6.200H0zM7.500 1.100L16 0v7.500H7.500zM0 8.500h6.500v6.200L0 13.800zM7.500 8.500H16V16l-8.500-1.100z" fill="#fff"/></svg></button>
        <button aria-label="Task view"><svg width="16" height="16" viewBox="0 0 16 16"><path d="M1 5h9v6H1zM.5 1v2h10V1M.5 15v-2h10v2M14 0v16" fill="none" stroke="#fff" stroke-width="1.200"/><path d="M12.500 4h3v3h-3z" fill="#fff"/></svg></button>
        <button class="open" aria-label="FAR"><svg width="24" height="24" viewBox="0 0 24 24"><path d="M0 1h24v20H0z" fill="#0a1ea8"/><path d="M1 2h6v17H1zM9 2h6v17H9zM17 2h6v17h-6z" fill="#0a28d0" stroke="#16b4f0"/><path d="M2 5h4M2 9h4M10 5h4M10 9h4M18 5h4" stroke="#3dd"/><path d="M0 21h24v2H0z" fill="#087898"/></svg></button>
        <button class="open" aria-label="Visual Studio"><svg width="24" height="24" viewBox="0 0 24 24"><path d="M17 0l7 3v18l-7 3L3 9l3-2zM0 5l3-1 4 3-3 10-3 2-1-1z" fill="#9b6fd8"/><path d="M17 0v24L3 19 0 18l3-2L15 6z" fill="#7c4bc0"/><path d="M17 7v10l-6-5z" fill="#302a30"/></svg></button>
        <button aria-label="PC"><svg width="24" height="24" viewBox="0 0 24 24"><path d="M1 1l15-1 4 15-15 2z" fill="#d8dde8"/><path d="M3 3l12-1 3 11-12 1z" fill="#0a34c0"/><path d="M5 17h12v3H5z" fill="#ccc"/><circle cx="17" cy="18" r="6" fill="#d8e0d0"/><path d="M14 20l3-3M17 19l3-3" stroke="#389a30" stroke-width="2"/></svg></button>
        <button aria-label="Radmin"><svg width="24" height="24" viewBox="0 0 24 24"><path d="M10 2h13v9H10z" fill="#36b834" stroke="#ddd"/><path d="M7 10h14v10H7z" fill="#38c0f0" stroke="#eee" stroke-width="1.500"/><path d="M11 21h7v2h-7z" fill="#ccc"/><path d="M2 12V1.500h4.500q2 0 2 2.300t-2 2.400H3M6 6l3 6" fill="none" stroke="#ff7b10" stroke-width="2.500"/></svg></button>
        <button class="open" aria-label="Explorer"><svg width="24" height="24" viewBox="0 0 24 24"><path d="M1 4h8l2 2h12v15H1z" fill="#f2b632"/><path d="M1 8h22v13H1z" fill="#ffd768"/><path d="M5 21v-7h14v7h-3v-3H8v3z" fill="#3a8edb"/></svg></button>
        <button aria-label="Sync"><svg width="24" height="24" viewBox="0 0 24 24"><circle cx="12" cy="12" r="11" fill="#fff"/><path d="M17 7H9.500L7 9.500V15l3-3v-2h4zM7 17h7.500l2.500-2.500V10l-3 3v2h-4z" fill="#1d64e8"/></svg></button>
        <button aria-label="Wallet"><svg width="24" height="24" viewBox="0 0 24 24"><circle cx="12" cy="12" r="11" fill="#fff"/><path d="M6 8l6-3 6 3v8l-6 3-6-3z" fill="#1d64e8"/><path d="M12 8l3.500 4-3.500 4-3.500-4z" fill="#fff"/><circle cx="12" cy="12" r="1.800" fill="#e8402c"/></svg></button>
        <button class="open" aria-label="KeePass"><svg width="24" height="24" viewBox="0 0 24 24"><circle cx="12" cy="12" r="11" fill="#9ab4e8" stroke="#eee"/><path d="M8.500 11V8q0-3 3.500-3t3.500 3v3" fill="none" stroke="#15203c" stroke-width="2"/><path d="M6 11h12v8H6z" fill="#15203c"/><path d="M7 14h10M7 16.500h10" stroke="#aac"/></svg></button>
        <button aria-label="Monitor"><svg width="24" height="24" viewBox="0 0 24 24"><path d="M11 9q-3-7 4-8 5-1 6 3 4 1 2 5z" fill="#44c4dc"/><path d="M0 7q7-3 14 0v14q-7 3-14 0z" fill="#1f8ed8"/><path d="M0 14h4l2-3 3 5 2-2h4" fill="none" stroke="#fff" stroke-width="1.500"/><circle cx="18" cy="18" r="4" fill="none" stroke="#48a8e0" stroke-width="2.500"/></svg></button>
        <button class="open" aria-label="Chrome"><svg width="24" height="24" viewBox="0 0 24 24"><path d="M12 12L1.600 6A12 12 0 0 1 22.400 6z" fill="#ea4335"/><path d="M12 12L1.600 6A12 12 0 0 0 12 24z" fill="#34a853"/><path d="M12 12L22.400 6A12 12 0 0 1 12 24z" fill="#fbbc05"/><circle cx="12" cy="12" r="5.500" fill="#fff"/><circle cx="12" cy="12" r="4.300" fill="#4285f4"/></svg></button>
        <button class="open" aria-label="Hydra"><svg width="26" height="24" viewBox="0 0 26 24"><path d="M2 20q2-6 6-5-6-2-7-6 4 1 6 0 0-5 4-5t5 4l5-5 1 3-4 6 3 8-6-2-5 3-2-3z" fill="#8898ac"/><circle cx="11" cy="9" r="4" fill="#c8d0ec"/><circle cx="11" cy="9" r="1.500" fill="#446"/><circle cx="20" cy="4" r="2" fill="#dde"/><path d="M11 11h14v12H11z" fill="#a01818" opacity=".85"/></svg></button>
        <button class="open" aria-label="Telegram"><svg width="26" height="24" viewBox="0 0 26 24"><circle cx="11" cy="12" r="11" fill="#2ca5e0"/><path d="M4 12l14-6-3 12-4-3-2 2v-4z" fill="#fff"/><rect x="10" y="13" width="16" height="11" rx="2" fill="#8d8d8d"/><text x="12" y="22" class="badge">..01</text></svg></button>
        <button class="open" aria-label="Paint"><svg width="24" height="24" viewBox="0 0 24 24"><path d="M2 1h19v22H2z" fill="#eef2f8"/><path d="M4 3h15v11H4z" fill="#10387c"/><path d="M6 10q5-6 11-4" stroke="#9ac" stroke-width="2" fill="none"/><path d="M20 9L9 20" stroke="#b01820" stroke-width="2"/><path d="M5 18h7" stroke="#333" stroke-width="3"/></svg></button>
        <button class="open" aria-label="Terminal"><svg width="26" height="24" viewBox="0 0 26 24"><path d="M2 20q2-6 6-5-6-2-7-6 4 1 6 0 0-5 4-5t5 4l5-5 1 3-4 6 3 8-6-2-5 3-2-3z" fill="#8898ac"/><circle cx="11" cy="9" r="4" fill="#c8d0ec"/><circle cx="11" cy="9" r="1.500" fill="#446"/><circle cx="20" cy="4" r="2" fill="#dde"/><path d="M11 11h14v12H11z" fill="#0a9898" opacity=".85"/></svg></button>
        <button class="open" aria-label="Notepad"><svg width="24" height="24" viewBox="0 0 24 24"><path d="M8 2h13l-1 19-3 1z" fill="#e0e4dc"/><path d="M7 1h12l-4 20H1z" fill="#7cc0cc"/><path d="M7 1h12l-1 5H5z" fill="#c0e4e8"/></svg></button>
        <button class="open current" aria-label="StockSharp"><svg width="26" height="24" viewBox="0 0 26 24"><path d="M0 1h26v22H0z" fill="#1393e0"/><text x="3" y="18" class="brand">S#</text></svg></button>
        <div class="tray">
            <svg width="12" height="8" viewBox="0 0 12 8"><path d="M0 7l6-6 6 6" fill="none" stroke="#fff" stroke-width="1.200"/></svg>
            <svg width="12" height="14" viewBox="0 0 12 14"><path d="M.5.500h11v11H.5z" fill="#333" stroke="#999"/><path d="M2 3h8M2 5.500h8M2 8h8" stroke="#999" stroke-dasharray="1 1"/><path d="M0 12.500h12" stroke="#5ac0f0" stroke-width="1.500"/></svg>
            <svg width="16" height="14" viewBox="0 0 16 14"><path d="M4.500 4.500H14v7H4.500zM15.500 6.500v3M1 1v3h4V1M3 4v6h2" fill="none" stroke="#fff" stroke-width="1.200"/><path d="M6.500 6.500h6v3h-6z" fill="#fff"/></svg>
            <svg width="14" height="14" viewBox="0 0 14 14"><g fill="none" stroke="#ddd" stroke-width="1.200"><path d="M1 13Q1 1 13 1M4 13q0-9 9-9M7 13q0-6 6-6M10 13q0-3 3-3"/></g></svg>
            <svg width="16" height="14" viewBox="0 0 16 14"><path d="M1 5h2.500L7 1.500v11L3.500 9H1zM9 5q1.500 2 0 4M11 3q3 4 0 8M13 1q4.500 6 0 12" fill="none" stroke="#ddd" stroke-width="1.200"/></svg>
            <div class="lang">ENG<br>US</div>
            <div class="clock">3:45 PM<br>3/27/2024</div>
            <svg class="notify" width="24" height="26" viewBox="0 0 24 26"><path d="M0 2h16v13H8l-4 4v-4H0z" fill="#fff"/><path d="M3 6h10M3 9h10M3 12h6" stroke="#222"/><circle cx="15" cy="17" r="8" fill="#333" stroke="#999"/><text x="12" y="21" class="count">7</text></svg>
        </div>
    </footer>
</body>
</html>
```

FILE: styles.css
```css
:root {
    --bg: #2d2d30;
    --line: #3f3f46;
    --field: #333337;
    --dark: #252526;
    --accent: #007acc;
    --text: #f1f1f1;
}
* {
    box-sizing: border-box;
}
body {
    margin: 0;
    height: 100vh;
    display: flex;
    flex-direction: column;
    overflow: hidden;
    background: var(--bg);
    color: var(--text);
    font: 12px/16px "Open Sans", "Noto Sans", sans-serif;
}
h1, h2, h3 {
    margin: 0;
    font-size: 12px;
    font-weight: normal;
}
button, input, select {
    margin: 0;
    padding: 0;
    border: 0;
    background: none;
    color: inherit;
    font: inherit;
}
select {
    appearance: none;
    opacity: 1;
}
svg {
    display: block;
    flex: none;
}
a {
    color: inherit;
    text-decoration: none;
}
.defs {
    position: absolute;
}
.app {
    position: relative;
    flex: 1;
    min-height: 0;
    display: flex;
    flex-direction: column;
    border: 1px solid var(--accent);
    overflow: clip;
    overflow-clip-margin: 1px;
}

/* title bar */
.titlebar {
    display: grid;
    grid-template-columns: 1fr auto 1fr;
    height: 37px;
}
.titlebar h1 {
    grid-column: 2;
    line-height: 38px;
}
.title-buttons {
    display: flex;
    justify-content: flex-end;
}
.title-buttons button {
    width: 34px;
    height: 32px;
    display: grid;
    place-items: center;
}
.title-buttons .wide {
    margin-right: 6px;
}

/* ribbon */
.ribbon-tabs {
    display: flex;
    height: 31px;
    margin: 0 3px;
    border-bottom: 1px solid var(--line);
}
.ribbon-tabs a {
    height: 31px;
    padding: 0 13px;
    line-height: 29px;
    border: 1px solid transparent;
    border-bottom: 0;
}
.ribbon-tabs .active {
    color: #1080d0;
    background: var(--bg);
    border-color: var(--line);
}
.collapse {
    width: 16px;
    height: 16px;
    margin: 6px 8px 0 auto;
    display: grid;
    place-items: center;
    border-radius: 50%;
    background: var(--field);
}
.ribbon {
    display: flex;
    height: 94px;
    margin: 0 3px;
    padding-right: 13px;
    border-bottom: 1px solid var(--line);
}
.group {
    flex: none;
    display: flex;
    flex-direction: column;
    justify-content: space-between;
    padding-top: 2px;
    border-right: 1px solid var(--line);
}
.group h2 {
    text-align: center;
    line-height: 20px;
}
.g-common { width: 499px; }
.g-designer { width: 86px; }
.g-breaks { width: 148px; }
.g-debug { width: 98px; }
.g-run { width: 107px; }
.g-report { width: 45px; }
.g-parts {
    flex: 1;
    padding: 2px 6px 0 3px;
    margin-right: 0;
}
.fields {
    display: grid;
    grid-template-columns: 69px 150px 74px 150px 23px;
    grid-auto-rows: 23px;
    align-items: center;
    margin-left: 6px;
}
.fields > label:nth-of-type(even) {
    padding-left: 7px;
}
.fields > button {
    margin-left: 7px;
}
.field {
    display: flex;
    align-items: center;
    gap: 6px;
    height: 22px;
    padding: 0 4px;
    border: 1px solid var(--line);
    background: var(--field);
}
.field input, .field select {
    flex: 1;
    min-width: 0;
    width: 0;
}
.fields > input[type="checkbox"] {
    appearance: none;
    width: 14px;
    height: 14px;
    border: 1px solid var(--line);
    background: var(--field);
}
.commands button, .gallery-items button {
    display: flex;
    align-items: center;
    gap: 3px;
    height: 23px;
    white-space: nowrap;
}
.commands {
    padding-left: 6px;
}
.commands button:disabled {
    color: #6d6d6d;
}
.g-run .commands {
    padding-left: 5px;
}
.flip {
    transform: scaleX(-1);
}
.turn {
    transform: rotate(90deg) scaleY(-1) scaleX(-1);
}
.split {
    display: flex;
}
.split .commands {
    padding-left: 1px;
}
.big {
    display: flex;
    flex-direction: column;
    align-items: center;
    width: 56px;
    padding-top: 2px;
    line-height: 14px;
    gap: 4px;
}
.split .big {
    display: block;
    white-space: nowrap;
}
.split .big svg {
    margin: 0 auto 4px;
}
.g-report .big {
    width: 44px;
    gap: 6px;
}
.gallery {
    display: flex;
    height: 69px;
    border: 1px solid var(--line);
    background: var(--field);
}
.gallery-items {
    flex: 1;
    display: grid;
    grid-template-columns: repeat(3, 136px);
    grid-auto-rows: 23px;
    padding: 1px 0 0 4px;
    overflow: hidden;
}
.gallery-nav {
    display: flex;
    flex-direction: column;
    width: 16px;
}
.gallery-nav button {
    flex: 1;
    display: grid;
    place-items: center;
}
.gallery-nav .dim {
    color: #777;
}

/* panels */
.workspace {
    flex: 1;
    min-height: 0;
    display: flex;
    gap: 4px;
    margin: 2px 5px 0;
}
.panel {
    display: flex;
    flex-direction: column;
    border: 1px solid var(--line);
}
.schemes {
    flex: none;
    width: 233px;
    border-right-width: 2px;
}
.caption {
    flex: none;
    display: flex;
    align-items: center;
    gap: 5px;
    height: 23px;
    padding: 0 6px 0 5px;
}
.caption h3 {
    margin-left: -2px;
    padding-right: 2px;
    color: #b8b8b8;
}
.caption > button, .doc-tab button {
    width: 11px;
    height: 16px;
    display: grid;
    place-items: center;
}
.caption .dots {
    margin-right: 8px;
}
.dots {
    flex: 1;
    height: 5px;
    --dot: #5d5d61;
    background:
        conic-gradient(at 1px 1px, transparent 75%, var(--dot) 0) 0 0 / 4px 4px,
        conic-gradient(at 1px 1px, transparent 75%, var(--dot) 0) 2px 2px / 4px 4px;
}
.caption.blue {
    background: var(--accent);
}
.blue h3 {
    margin-left: 0;
    color: #fff;
}
.blue .dots {
    --dot: #59a8de;
}
.faded {
    opacity: 0.6;
}
.tree {
    flex: 1;
    min-height: 0;
    position: relative;
    background: var(--dark);
    overflow: hidden;
}
table {
    width: 100%;
    border-collapse: collapse;
    table-layout: fixed;
}
th {
    height: 21px;
    padding: 0 4px;
    text-align: left;
    font-weight: normal;
    background: var(--field);
    border: 1px solid var(--line);
    border-left: 0;
    white-space: nowrap;
    overflow: hidden;
}
.tree th {
    height: 20px;
    padding-left: 5px;
}
.tree th:nth-child(2) {
    width: 33px;
    padding-left: 4px;
}
.tree .gutter {
    width: 17px;
    border-right: 0;
}
.tree td {
    height: 21px;
    padding: 0;
    overflow: hidden;
    white-space: nowrap;
}
.tree td:first-child {
    display: flex;
    align-items: flex-start;
    padding-left: 43px;
}
.tree td:first-child svg {
    margin-top: 3px;
}
.tree td:first-child span {
    flex: 1;
    height: 21px;
    margin-left: 2px;
    line-height: 18px;
    border-bottom: 1px solid var(--line);
}
.tree td:nth-child(2) {
    padding-left: 4px;
    border-bottom: 1px solid var(--line);
}
.tree .parent td, .tree .parent td:first-child span {
    height: 20px;
}
.tree .parent td:first-child {
    padding-left: 8px;
}
.tree td:first-child .exp {
    width: 6px;
    margin: 7px 9px 0 0;
}
.selected td:first-child span {
    background: #36363a;
}
.selected td:nth-child(2) {
    background: #3e3e40;
}
.vscroll {
    flex: none;
    display: flex;
    flex-direction: column;
    align-items: center;
    justify-content: space-between;
    width: 17px;
    padding: 6px 0;
    color: #999;
    background: var(--field);
    border-left: 1px solid var(--line);
}
.tree .vscroll {
    position: absolute;
    top: 21px;
    right: 0;
    bottom: 0;
}
.hscroll {
    flex: none;
    display: flex;
    align-items: center;
    height: 18px;
    padding: 0 22px 0 7px;
    color: #999;
    background: var(--field);
    border-top: 1px solid var(--line);
}
.hscroll i {
    width: 56px;
    height: 10px;
    margin: 0 auto 0 6px;
    background: #686868;
}

/* documents */
.documents {
    flex: 1;
    min-width: 0;
    display: flex;
    flex-direction: column;
    margin-right: -1px;
}
.doc-tabs {
    flex: none;
    display: grid;
    grid-template-columns: 178px 185px 185px 155px 104px 164px 106px 1fr;
    height: 25px;
    border-bottom: 2px solid var(--accent);
}
.doc-tab {
    display: flex;
    align-items: center;
    gap: 5px;
    padding: 1px 7px 0 12px;
}
.doc-tab a {
    flex: 1;
    margin-left: -2px;
    white-space: nowrap;
}
.doc-tab.active {
    --scheme: #3fa9e4;
    background: var(--accent);
}
.more {
    display: grid;
    place-items: center;
    width: 18px;
    margin-left: auto;
}
.doc-body {
    flex: 1;
    min-height: 0;
    display: flex;
    margin-top: 1px;
    border: 1px solid var(--line);
    border-top: 4px solid #38383d;
    padding: 2px 0 0 2px;
}
.scheme-panel {
    flex: 1;
    min-width: 0;
    display: flex;
    flex-direction: column;
    border: 1px solid var(--line);
}
.scheme-panel > .caption {
    height: 24px;
    padding-right: 7px;
}
.scheme-body {
    flex: 1;
    min-height: 0;
    display: flex;
    align-items: flex-start;
}
.side-tab {
    display: flex;
    align-items: center;
    gap: 3px;
    width: 26px;
    writing-mode: vertical-rl;
    line-height: 20px;
    justify-content: flex-start;
}
.side-tab.left {
    border-left: 6px solid var(--line);
    margin-right: 16px;
}
.side-tab.right {
    border-right: 6px solid var(--line);
    margin-left: 17px;
}
.doc-side .side-tab.right {
    width: 28px;
    margin-left: 4px;
    padding-right: 2px;
}
.doc-side {
    width: 32px;
}
.designer {
    flex: 1;
    min-width: 0;
    align-self: stretch;
    display: flex;
    flex-direction: column;
    margin: 9px 0 14px;
    border: 1px solid var(--line);
}
.canvas {
    flex: 1;
    min-height: 0;
    display: flex;
    justify-content: space-between;
    overflow: hidden;
}
.diagram {
    flex: none;
}
.wires path {
    fill: none;
    stroke: #5a5a5d;
    stroke-width: 1.5;
    marker-end: url(#arrow);
}
.wires .tail {
    marker-end: none;
}
.node rect {
    rx: 5px;
    fill: #d3d3d3;
    stroke: #a9a9a9;
    stroke-width: 3;
}
.glyphs {
    --candle: #d4202c;
    --axis: #777;
    --hand-a: #d8282c;
    --hand-b: #1c9c34;
}
.labels text {
    font: bold 10px "Open Sans", "Noto Sans", sans-serif;
    fill: #000;
}
.ports rect {
    stroke: #111;
    stroke-width: 1;
}
.canvas .vscroll i {
    width: 10px;
    height: 227px;
    margin: 6px 0 auto;
    background: #686868;
}
.scale {
    flex: none;
    display: flex;
    align-items: center;
    gap: 5px;
    height: 26px;
    padding-left: 2px;
    color: #b8b8b8;
}
.scale input {
    appearance: none;
    width: 196px;
    height: 14px;
    margin-right: 4px;
    background: linear-gradient(#4a4a4e, #4a4a4e) center / 100% 2px no-repeat;
}
.scale input::-webkit-slider-thumb {
    appearance: none;
    width: 5px;
    height: 12px;
    background: #f1f1f1;
}
.bottom-tabs {
    flex: none;
    display: flex;
    height: 24px;
    background: var(--dark);
}
.bottom-tabs a {
    display: flex;
    align-items: center;
    gap: 3px;
    padding: 0 5px;
    color: var(--accent);
}

/* logs */
.logs {
    flex: none;
    height: 180px;
    margin: 4px 5px 0;
}
.logs .caption {
    height: 23px;
}
.logs-body {
    flex: 1;
    min-height: 0;
    display: flex;
    border-top: 1px solid var(--line);
}
.log-tree {
    width: 150px;
    display: flex;
    justify-content: space-between;
    background: var(--dark);
    border-right: 1px solid var(--line);
}
.log-row {
    flex: 1;
    display: flex;
    align-items: center;
    height: 21px;
    padding-left: 10px;
}
.log-row svg:nth-child(2) {
    margin: 0 2px 0 8px;
}
.log-row span {
    flex: 1;
    padding-left: 4px;
    line-height: 21px;
    background: #3e3e42;
}
.splitter {
    width: 4px;
    background: repeating-linear-gradient(#fff 0 1px, transparent 1px 2px) center / 2px 14px no-repeat;
}
.log-list {
    flex: 1;
    background: var(--dark);
    border-left: 1px solid var(--line);
}
.log-filter {
    display: flex;
    gap: 1px;
    height: 22px;
    background: var(--bg);
}
.log-filter button {
    display: flex;
    align-items: center;
    gap: 3px;
    height: 22px;
    padding: 0 3px;
    background: var(--accent);
    white-space: nowrap;
}
.grip {
    flex: none;
    width: 5px;
    height: 17px;
    margin: 3px 3px 0 2px;
    background:
        conic-gradient(at 1px 1px, transparent 75%, #ccc 0) 0 0 / 4px 4px,
        conic-gradient(at 1px 1px, transparent 75%, #ccc 0) 2px 2px / 4px 4px;
}
.log-list th:first-child {
    width: 120px;
}
.history {
    flex: none;
    display: flex;
    gap: 5px;
    height: 27px;
    padding: 4px 8px 0;
}
.history button {
    width: 34px;
    height: 20px;
    display: grid;
    place-items: center;
    border: 1px solid var(--line);
}

/* detached window */
.chart-window {
    position: absolute;
    left: 303px;
    top: 602px;
    right: -1px;
    bottom: -1px;
    background: var(--bg);
    border-left: 1px solid var(--accent);
    overflow: hidden;
}
.chart-window .caption {
    margin-right: -8px;
    padding: 0 0 0 4px;
}
.chart-window h3 {
    margin-left: -1px;
}
.toolbar {
    display: flex;
    height: 23px;
    padding-left: 1px;
    white-space: nowrap;
}
.toolbar > button {
    flex: none;
    width: 22px;
    height: 23px;
    margin-right: 1px;
    display: grid;
    place-items: center;
    align-content: center;
}
.toolbar .arrow {
    width: 15px;
    margin-right: 0;
}
.toolbar .on {
    background: var(--accent);
}
.toolbar .off {
    opacity: 0.5;
}
.sep {
    flex: none;
    width: 1px;
    height: 20px;
    margin: 1px 5px 0 4px;
    background: var(--line);
}
.combo {
    flex: none;
    display: flex;
    align-items: center;
    gap: 6px;
    width: 120px;
    height: 22px;
    margin: 0 10px 0 6px;
    padding: 0 4px 0 3px;
    border: 1px solid var(--line);
    background: var(--field);
}
.combo select {
    flex: 1;
    width: 0;
    min-width: 0;
}
.combo.period {
    width: 65px;
    margin: 0 5px 0 0;
    padding: 0 4px 0 8px;
}
.combo.period select {
    flex: none;
    width: 31px;
    margin-right: auto;
    overflow: hidden;
}
.corner {
    margin: 14px 0 0 4px;
}

/* docking guides */
.dock {
    position: absolute;
    left: 242px;
    right: 36px;
    top: 194px;
    bottom: 212px;
    display: grid;
    place-items: center;
    pointer-events: none;
}
.preview {
    position: absolute;
    inset: calc(50% + 1px) 1px 1px;
    background: rgba(59, 59, 60, 0.63);
    border: 1px solid #0f64a4;
}
.guide {
    --g: #14609a;
    width: 34px;
    height: 34px;
    border: 3px solid var(--line);
    background: var(--field);
    position: relative;
}
.guide::after {
    content: "";
    position: absolute;
    background: linear-gradient(var(--dir, to bottom), var(--g) 3px, var(--field) 3px 4px, var(--hot, var(--g)) 4px);
}
.guide.top::after { inset: 1px 0 14px; }
.guide.bottom::after { inset: 14px 0 1px; --dir: to top; }
.guide.left::after { inset: 0 14px 0 1px; --dir: to right; }
.guide.right::after { inset: 0 1px 0 14px; --dir: to left; }
.guide.center::after {
    inset: 1px 0;
    background: var(--g);
    clip-path: polygon(0 0, 100% 0, 100% 84%, 38% 84%, 38% 100%, 0 100%);
}
.guide.hot {
    --hot: var(--accent);
}
.edge {
    position: absolute;
}
.edge.top { top: 0; }
.edge.bottom { bottom: 0; }
.edge.left { left: 0; }
.edge.right { right: 0; }
.compass {
    position: relative;
    display: grid;
    grid-template-areas: ". t ." "l c r" ". b .";
    grid-template-rows: repeat(3, 34px);
    grid-template-columns: repeat(3, 34px);
    background: radial-gradient(circle, var(--line) 36px, transparent 37px);
}
.compass .top { grid-area: t; }
.compass .left { grid-area: l; }
.compass .center { grid-area: c; }
.compass .right { grid-area: r; }
.compass .bottom { grid-area: b; }

/* taskbar */
.taskbar {
    flex: none;
    display: flex;
    height: 40px;
    background: linear-gradient(90deg, #3d3b38, #35302e 130px, #35201f 220px, #2a2021 340px, #222 480px, #222);
}
.taskbar > button {
    width: 49px;
    display: grid;
    place-items: center;
    border: 0 solid transparent;
    border-width: 0 4px 0 5px;
    background-clip: padding-box;
}
.taskbar > .open {
    background-image: linear-gradient(#ffcfae, #ffcfae);
    background-size: 100% 2px;
    background-position: bottom;
    background-repeat: no-repeat;
}
.taskbar > .current {
    background-color: #505050;
    border-width: 0 2px;
}
.badge {
    font: 9px "Open Sans", sans-serif;
    fill: #fff;
}
.brand {
    font: bold 16px "Open Sans", sans-serif;
    fill: #fff;
}
.count {
    font: 12px "Open Sans", sans-serif;
    fill: #fff;
}
.tray {
    flex: 1;
    display: flex;
    align-items: center;
    justify-content: flex-end;
    gap: 11px;
    margin-right: 4px;
    padding-right: 14px;
    border-right: 1px solid #777;
    text-align: center;
    line-height: 18px;
}
.lang {
    margin-right: -1px;
}
.clock {
    width: 56px;
}
.notify {
    margin-left: 4px;
}
```
